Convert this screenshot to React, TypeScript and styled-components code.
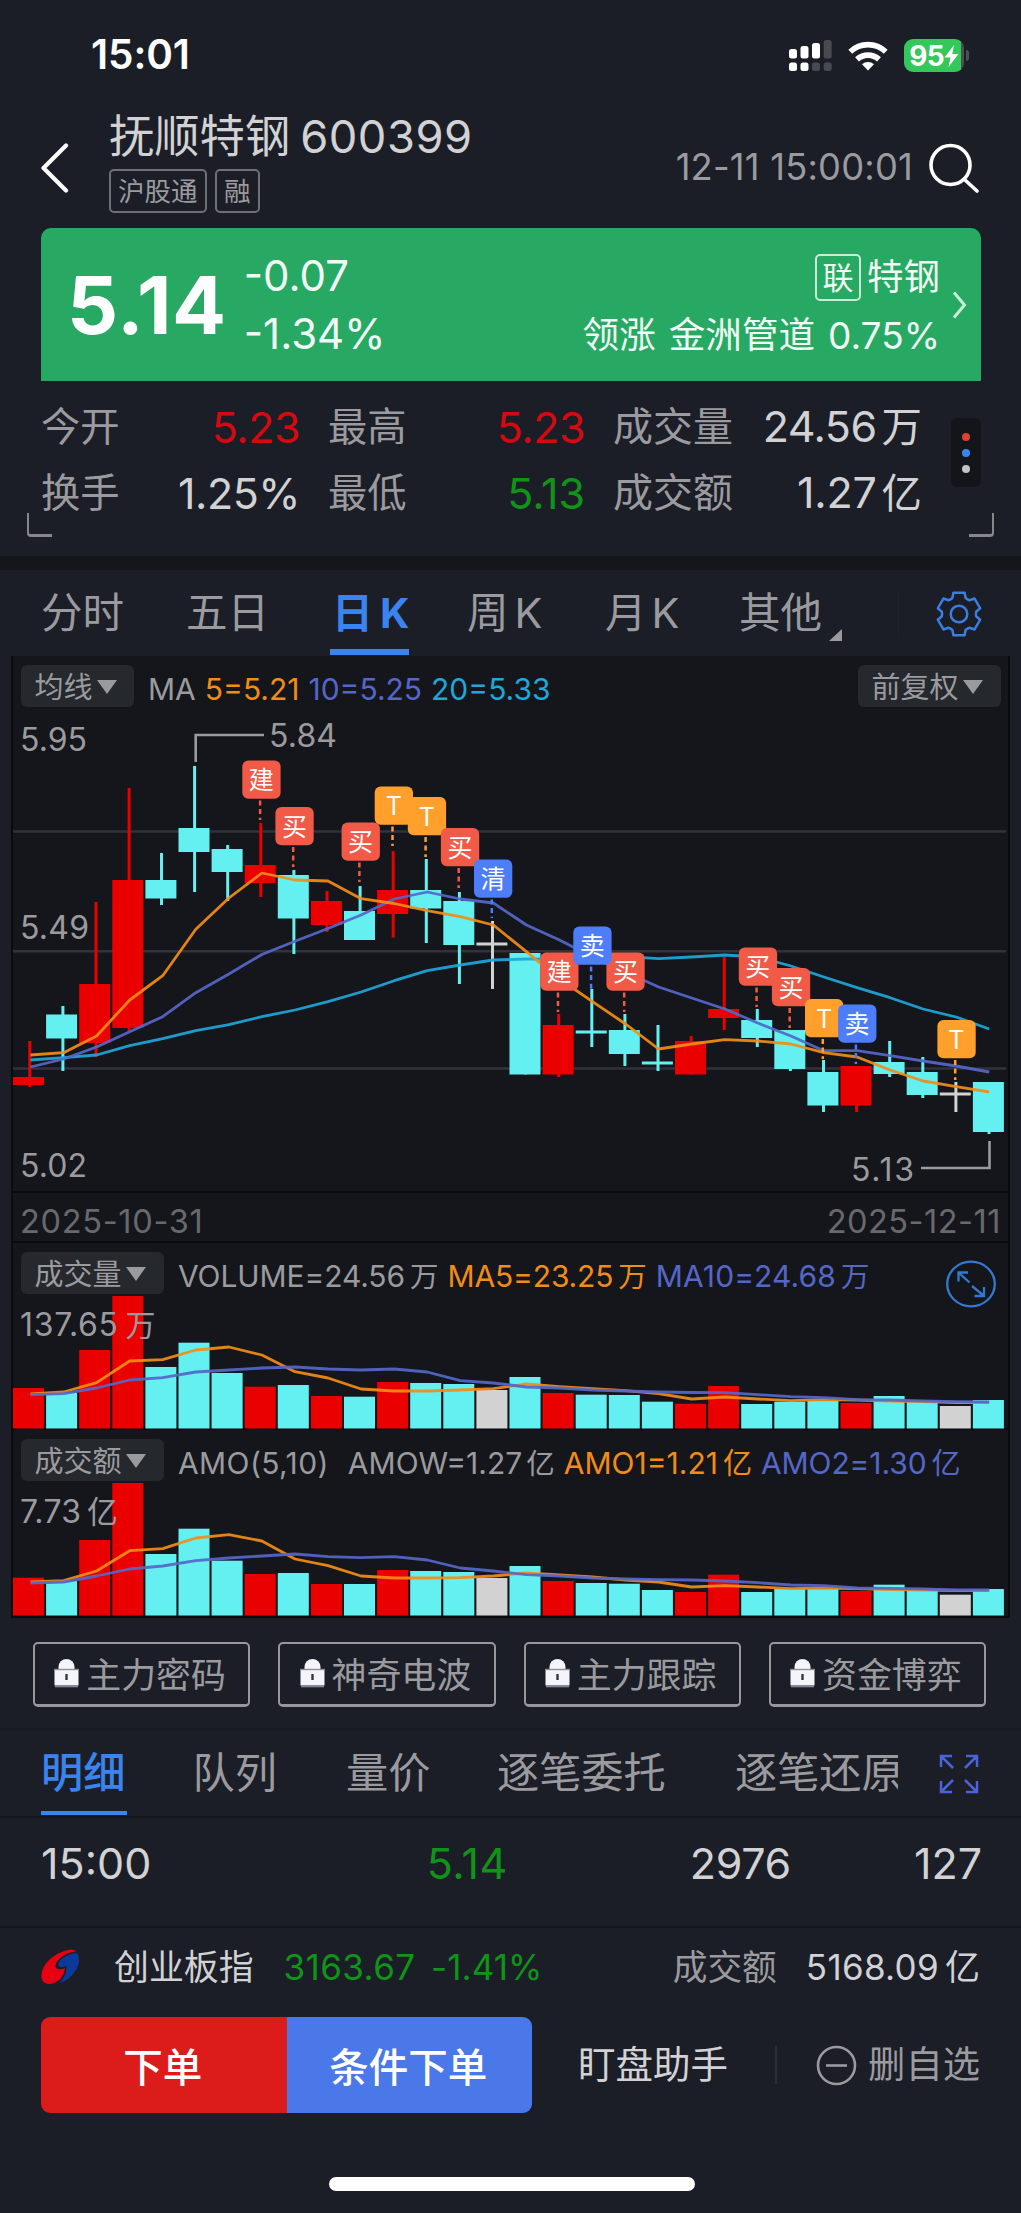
import React from 'react';
import styled, { createGlobalStyle, css } from 'styled-components';

const C = {
  bg: '#1b1e27',
  panel: '#15161b',
  line: '#0a0b0e',
  text: '#d2d2d4',
  dim: '#9b9b9f',
  faint: '#68696d',
  blue: '#3a84f0',
  red: '#eb0000',
  cyan: '#64f0f0',
  grey: '#d2d2d2',
  down: '#109418',
  up: '#d40a10',
  ma5: '#f28c18',
  ma10: '#5467c8',
  ma20: '#1ea7d8',
};

const FONT = `Inter, "Noto Sans CJK SC", sans-serif`;

const Global = createGlobalStyle`
  html, body { margin: 0; background: ${C.bg}; }
  * { box-sizing: border-box; }
  svg { display: block; flex: none; }
`;

const Screen = styled.div`
  width: 1021px;
  height: 2213px;
  display: flex;
  flex-direction: column;
  overflow: hidden;
  background: ${C.bg};
  color: ${C.text};
  font-family: ${FONT};
  line-height: 1;
  white-space: nowrap;
`;

interface TProps { $s: number; $c?: string; $w?: number; $ls?: number; $ml?: number; }
const T = styled.span<TProps>`
  font-size: ${p => p.$s}px;
  font-weight: ${p => p.$w ?? 400};
  letter-spacing: ${p => p.$ls ?? 0}px;
  margin-left: ${p => p.$ml ?? 0}px;
  ${p => p.$c && css`color: ${p.$c};`}
`;
const Unit = styled.span<{ $gap?: number; $em?: number }>`
  margin-left: ${p => p.$gap ?? 5}px;
  font-size: ${p => p.$em ?? 1}em;
  letter-spacing: 0;
`;

/* ---------- status bar ---------- */
const StatusBar = styled.header`
  height: 111px;
  display: flex;
  align-items: center;
  padding: 0 52px 0 91px;
`;
const StatusIcons = styled.div`
  margin-left: auto;
  display: flex;
  align-items: center;
  gap: 16px;
`;
const Battery = styled.div`
  display: flex;
  align-items: center;
  justify-content: center;
  width: 60px;
  height: 33px;
  border-radius: 9px;
  background: linear-gradient(90deg, #34c759 95%, #4d5055 95%);
  color: #fff;
`;
const BatteryNub = styled.i`
  width: 3px;
  height: 11px;
  margin-left: -14px;
  border-radius: 0 4px 4px 0;
  background: #4d5055;
`;

/* ---------- title ---------- */
const TitleBar = styled.div`
  height: 117px;
  display: flex;
  align-items: flex-start;
  padding: 0 41px;
`;
const BackIcon = styled.svg`margin-top: 32px;`;
const TitleBlock = styled.div`
  margin-left: 40px;
  display: flex;
  flex-direction: column;
`;
const TitleLine = styled.div`
  height: 52px;
  display: flex;
  align-items: center;
`;
const Tags = styled.div`
  display: flex;
  gap: 8.5px;
  margin-top: 6px;
`;
const Tag = styled.span`
  height: 44px;
  display: flex;
  align-items: center;
  padding: 0 7px;
  border: 2px solid #6e7075;
  border-radius: 5px;
  font-size: 26.5px;
  color: ${C.dim};
`;
const TitleRight = styled.div`
  margin-left: auto;
  margin-top: 31px;
  display: flex;
  align-items: center;
  gap: 16px;
`;

/* ---------- quote card ---------- */
const Quote = styled.section`
  height: 153px;
  margin: 0 40px 0 41px;
  padding: 0 13px 0 26px;
  display: flex;
  align-items: center;
  border-radius: 10px 10px 0 0;
  background: #27a963;
  color: #fff;
`;
const Stack = styled.div<{ $ml?: string; $end?: boolean }>`
  display: flex;
  flex-direction: column;
  align-items: ${p => (p.$end ? 'flex-end' : 'flex-start')};
  margin-left: ${p => p.$ml ?? '0'};
  margin-top: ${p => (p.$end ? '3px' : '0')};
  color: #f1fbf5;
`;
const StackRow = styled.div`
  height: 58px;
  display: flex;
  align-items: center;
`;
const LinkTag = styled.span`
  width: 46px;
  height: 47px;
  display: flex;
  align-items: center;
  justify-content: center;
  border: 2px solid #c9ecd8;
  border-radius: 5px;
  margin-right: 6px;
  font-size: 31px;
`;

/* ---------- stats ---------- */
const Stats = styled.section`
  position: relative;
  height: 175px;
  display: flex;
  align-items: flex-start;
  padding: 13px 40px 0 41px;
`;
const StatGrid = styled.div`
  display: grid;
  grid-template-columns: 259px 257px 309px;
  grid-auto-rows: 66px;
  column-gap: 28px;
`;
const Stat = styled.div`
  display: flex;
  align-items: center;
  justify-content: space-between;
`;
const MorePill = styled.div`
  width: 30px;
  height: 69px;
  margin: 24px 0 0 auto;
  display: flex;
  flex-direction: column;
  align-items: center;
  justify-content: center;
  gap: 8px;
  border-radius: 6px;
  background: #14151a;
`;
const Dot = styled.i<{ $c: string }>`
  width: 8px;
  height: 8px;
  border-radius: 50%;
  background: ${p => p.$c};
`;
const Corner = styled.i<{ $side: 'left' | 'right' }>`
  position: absolute;
  bottom: 19px;
  ${p => p.$side}: 27px;
  width: 25px;
  height: 24px;
  border: 0 solid #85878b;
  border-bottom-width: 3px;
  border-${p => p.$side}-width: 2px;
  border-bottom-${p => p.$side}-radius: 4px;
`;
const Band = styled.div`
  height: 14px;
  background: #15161b;
`;

/* ---------- period tabs ---------- */
const Tabs = styled.nav`
  height: 86px;
  display: grid;
  grid-template-columns: 145px 144px 137px 138px 134px 159px 1fr;
  padding-left: 41px;
  color: ${C.dim};
`;
const Tab = styled.div`
  display: flex;
  align-items: center;
  height: 86px;
  padding-top: 2px;
  font-size: 41.5px;
`;
const TabActive = styled(Tab)`
  height: 85px;
  width: 79px;
  padding-left: 2px;
  font-weight: 700;
  font-size: 41px;
  color: ${C.blue};
  border-bottom: 6px solid ${C.blue};
  border-top: 6px solid transparent;
`;
const CornerMark = styled.i`
  align-self: flex-end;
  margin: 0 0 15px 7px;
  border-left: 13px solid transparent;
  border-bottom: 12px solid ${C.dim};
`;
const GearCell = styled.div`
  display: flex;
  align-items: center;
  height: 46px;
  margin-top: 20.5px;
  border-left: 1px solid #20232c;
  padding-left: 37px;
`;

/* ---------- charts ---------- */
const Charts = styled.section`
  width: 999px;
  height: 962px;
  margin-left: 11px;
  border: 2px solid ${C.line};
  border-top: 0;
  background: ${C.panel};
  display: flex;
  flex-direction: column;
`;
const Panel = styled.div<{ $h: number; $last?: boolean }>`
  position: relative;
  flex: none;
  height: ${p => p.$h}px;
  border-bottom: ${p => (p.$last ? 0 : 2)}px solid ${C.line};
  display: flex;
  flex-direction: column;
  justify-content: space-between;
`;
const Legend = styled.div`
  display: flex;
  align-items: center;
  margin: 9px 7px 0 8px;
  height: 42px;
`;
const Values = styled.div`
  display: flex;
  align-items: center;
  height: 30px;
  padding-top: 6px;
`;
const Chip = styled.div<{ $w: number; $right?: boolean }>`
  width: ${p => p.$w}px;
  height: 42px;
  margin-left: ${p => (p.$right ? 'auto' : '0')};
  margin-right: ${p => (p.$right ? '0' : '14px')};
  display: flex;
  align-items: center;
  padding: 2px 0 0 13.5px;
  gap: 4px;
  border-radius: 6px;
  background: #25282d;
  color: ${C.dim};
  font-size: 29px;
`;
const Caret = styled.i`
  margin-top: -1px;
  border: 10.5px solid transparent;
  border-top: 14px solid ${C.dim};
  border-bottom: 0;
`;
const DateRow = styled.div`
  flex: none;
  height: 50px;
  display: flex;
  align-items: center;
  justify-content: space-between;
  padding: 10px 7px 0 7px;
  border-bottom: 2px solid ${C.line};
`;
const Expand = styled.svg`
  position: absolute;
  right: 12.5px;
  top: 17px;
`;

/* ---------- strategy buttons ---------- */
const LockRow = styled.div`
  height: 112px;
  display: flex;
  gap: 28px;
  padding: 24px 35px 0 33px;
  border-bottom: 2px solid #181a22;
`;
const LockButton = styled.button`
  flex: 1;
  height: 65px;
  display: flex;
  align-items: center;
  justify-content: center;
  gap: 7px;
  padding: 0 3px 2px 0;
  border: 2px solid #98989c;
  border-bottom-width: 3px;
  border-radius: 5px;
  background: none;
  color: ${C.dim};
  font: 400 34.9px ${FONT};
`;

/* ---------- detail ---------- */
const DetailTabs = styled.nav`
  height: 88px;
  display: grid;
  grid-template-columns: 150.5px 153.5px 151px 238px 164px 1fr;
  padding-left: 41px;
  border-bottom: 2px solid #15171e;
  color: ${C.dim};
`;
const DetailTab = styled.div<{ $on?: boolean }>`
  height: 85px;
  width: max-content;
  max-width: 100%;
  overflow: hidden;
  display: flex;
  align-items: center;
  font-size: 42.2px;
  padding-left: 1px;
  padding-top: 2px;
  ${p => p.$on && css`
    width: 86px;
    color: ${C.blue};
    font-weight: 500;
    padding-left: 0;
    padding-top: 6px;
    border-bottom: 4px solid ${C.blue};
  `}
`;
const FullIcon = styled.svg`
  margin: 24px 0 0 41px;
`;
const Trade = styled.div`
  height: 110px;
  display: grid;
  grid-template-columns: 308px 159px 283px 191px;
  align-items: center;
  padding: 0 0 18px 41px;
  border-bottom: 2px solid #15171e;
  text-align: right;
`;
const TradeTime = styled(T)`text-align: left;`;

/* ---------- bottom ---------- */
const IndexRow = styled.div`
  height: 89px;
  display: flex;
  align-items: center;
  padding: 0 41px 11px 40px;
`;
const Spacer = styled.div`flex: 1;`;
const Actions = styled.div`
  height: 96px;
  display: flex;
  align-items: center;
  padding: 0 41px;
`;
const Action = styled.button<{ $bg: string; $left?: boolean }>`
  width: 245.5px;
  height: 96px;
  padding: 0 2px 2px 0;
  border: 0;
  border-radius: ${p => (p.$left ? '9px 0 0 9px' : '0 9px 9px 0')};
  background: ${p => p.$bg};
  color: #fff;
  font: 500 39.5px ${FONT};
`;
const VLine = styled.i`
  width: 2px;
  height: 38px;
  margin-left: 47px;
  background: #2b2e38;
`;
const HomeBar = styled.div`
  width: 366px;
  height: 14px;
  margin: 64px auto 0 329px;
  border-radius: 7px;
  background: #fff;
`;

/* ---------- data ---------- */
type Tone = 'r' | 'c' | 'g';
const FILL: Record<Tone, string> = { r: C.red, c: C.cyan, g: C.grey };

// [tone, body top, body bottom, wick top, wick bottom]
const CANDLES: [Tone, number, number, number, number][] = [
  ['r', 1077, 1085, 1041, 1087], ['c', 1014.5, 1038.5, 1006, 1071], ['r', 984, 1043, 902, 1057],
  ['r', 880, 1028, 788, 1031], ['c', 880, 898.5, 853, 905], ['c', 828, 852, 766, 892],
  ['c', 849, 872, 845, 901], ['r', 865, 883, 823, 897], ['c', 875, 918.5, 870, 954],
  ['r', 901, 925, 891, 932], ['c', 911, 940, 886, 940], ['r', 890, 914, 851, 937.5],
  ['c', 890, 908.5, 859, 943], ['c', 901, 945, 892, 984], ['g', 942.5, 945.5, 921, 989],
  ['c', 953, 1074.5, 953, 1074.5], ['r', 1025, 1074.5, 1014, 1077], ['c', 1030.5, 1033.5, 989, 1047],
  ['c', 1030, 1054, 1014, 1066], ['c', 1061.5, 1064.5, 1025, 1071], ['r', 1041, 1074.5, 1036, 1074.5],
  ['r', 1009, 1018, 957, 1030], ['c', 1020, 1038, 1009, 1047], ['c', 1030, 1069, 1030, 1071],
  ['c', 1072, 1105.5, 1060, 1112], ['r', 1066, 1105.5, 1066, 1112], ['c', 1062, 1074, 1041, 1077],
  ['c', 1072, 1095, 1057, 1098], ['g', 1092.5, 1095.5, 1082, 1112], ['c', 1082, 1132, 1082, 1134],
];
const MA5 = [1055, 1052.7, 1036, 1000, 975.7, 929.3, 898, 873, 880, 881, 898.7, 903.5, 910.7, 916.7, 925, 951.7, 979, 1001.7, 1024, 1049, 1044, 1039.7, 1041, 1044, 1052.7, 1057, 1070, 1081, 1086.7, 1092];
const MA10 = [1067, 1059, 1047, 1031.7, 1016.7, 992.7, 974, 954.5, 941.3, 928.5, 915, 899, 892, 899, 903, 925, 940, 957, 972, 987, 998, 1009, 1023, 1036, 1050.7, 1050.7, 1055.7, 1061, 1066, 1072];
const MA20 = [1060, 1057.7, 1055, 1045.7, 1038.7, 1030.7, 1024.7, 1016.7, 1010, 1001.7, 992, 980.7, 970.7, 965, 960, 959, 959, 957.5, 956.7, 958.7, 957, 955, 957, 966, 977, 987.7, 997.7, 1009, 1017, 1029];

const MARK: Record<string, string> = { r: '#f05a46', t: '#ffa02d', b: '#4d7df8' };
// [index, kind, label, top, stem bottom] in paint order
const MARKS: [number, string, string, number, number][] = [
  [7, 'r', '建', 760.5, 820], [8, 'r', '买', 807, 867], [10, 'r', '买', 822.5, 882],
  [11, 't', 'T', 786.5, 846], [12, 't', 'T', 797, 857], [13, 'r', '买', 828, 888],
  [14, 'b', '清', 859.5, 918], [16, 'r', '建', 952.5, 1012], [18, 'r', '买', 952.5, 1012],
  [17, 'b', '卖', 926.5, 990], [22, 'r', '买', 947.5, 1007], [23, 'r', '买', 968, 1028],
  [24, 't', 'T', 999, 1059], [25, 'b', '卖', 1004.5, 1064], [28, 't', 'T', 1020, 1080],
];

const VOL = [1387, 1391.7, 1349, 1295, 1366, 1341.7, 1372, 1385.7, 1384, 1395, 1395.7, 1381, 1382, 1383, 1389, 1376, 1392, 1393.7, 1394, 1400.7, 1402.7, 1385, 1403, 1400.7, 1400, 1402, 1395, 1401, 1405, 1399];
const VOL5 = [1393, 1391, 1381.7, 1360, 1358.7, 1349, 1346, 1354, 1370.7, 1377, 1388, 1390, 1390, 1389, 1387.7, 1383, 1385.7, 1387.7, 1389.7, 1392.7, 1398, 1396, 1398, 1399.7, 1398.7, 1399, 1400, 1400.7, 1401.7, 1401.7];
const VOL10 = [1393.7, 1392.7, 1387, 1379, 1376.7, 1371, 1369, 1367, 1366, 1368, 1369, 1368, 1371, 1379.7, 1382, 1386, 1387, 1389, 1390, 1391, 1391.5, 1391.7, 1393.7, 1395.7, 1396.7, 1398.7, 1399, 1400, 1400.7, 1401];
const AMO = [1577.7, 1581, 1540, 1483, 1554, 1528.7, 1560.7, 1574, 1573, 1584, 1584, 1570, 1571, 1572, 1578, 1566, 1581, 1583, 1583.7, 1590, 1592, 1574.7, 1592, 1589, 1589, 1591, 1584.7, 1590, 1594.7, 1589];
const AMO5 = [1582, 1580.7, 1571, 1550.7, 1548.7, 1538, 1534.7, 1541, 1559, 1565.7, 1576, 1578, 1578, 1577.7, 1576, 1573, 1575, 1577, 1580, 1582, 1587, 1585.7, 1587, 1588.7, 1588, 1588.7, 1589.7, 1590, 1590.7, 1590.7];
const AMO10 = [1583, 1582, 1576, 1569, 1566, 1560.7, 1558, 1556, 1554, 1556.7, 1557.7, 1556.7, 1560, 1568, 1571, 1574.7, 1576, 1578, 1579, 1579.7, 1580, 1581, 1582.7, 1585, 1585.7, 1588, 1588.3, 1589, 1590, 1590];

const left = (i: number) => 13 + i * 33.1;
const mid = (i: number) => 30.5 + i * 33.06;
const points = (ys: number[]) => ys.map((y, i) => `${mid(i).toFixed(1)},${y}`).join(' ');

const Line = ({ ys, color }: { ys: number[]; color: string }) => (
  <polyline points={points(ys)} fill="none" stroke={color} strokeWidth={2.8} strokeLinejoin="round" strokeOpacity={0.93} />
);

const ChartText = styled.text<{ $s?: number }>`
  font-family: ${FONT};
  font-size: ${p => p.$s ?? 32}px;
  fill: ${C.dim};
`;
const MarkText = styled.text`
  font-family: ${FONT};
  font-size: 25px;
  fill: #fff;
  text-anchor: middle;
`;

const PriceChart = () => (
  <svg width="995" height="476" viewBox="13 715 995 476">
    {[831.5, 951.3, 1068.5].map(y => (
      <line key={y} x1="13" x2="1006" y1={y} y2={y} stroke="#31323c" strokeWidth="2.6" />
    ))}
    {CANDLES.map(([k, t, b, wt, wb], i) => (
      <g key={i} fill={FILL[k]}>
        <rect x={left(i)} y={t} width="31" height={b - t} />
        <rect x={left(i) + 14.6 + (i < 4 ? 0.7 : 0)} y={wt} width="3" height={wb - wt} />
      </g>
    ))}
    <Line ys={MA20} color={C.ma20} />
    <Line ys={MA10} color={C.ma10} />
    <Line ys={MA5} color={C.ma5} />
    {MARKS.map(([i, k, label, top, end]) => {
      const cx = left(i) + 16.6;
      return (
        <g key={i}>
          <line x1={cx - 1.2} x2={cx - 1.2} y1={top + 40} y2={end} stroke={MARK[k]} strokeWidth="2.5" strokeDasharray="5 3.6" />
          <rect x={cx - 19} y={top} width="38.3" height="38.3" rx="6" fill={MARK[k]} />
          <MarkText x={cx} y={top + (label === 'T' ? 28.5 : 28.6)}>{label}</MarkText>
        </g>
      );
    })}
    <g fill="none" stroke={C.dim} strokeWidth="2.6">
      <path d="M195.7 762V735H264" />
      <path d="M989.5 1141V1168H921" />
    </g>
    <ChartText x="20" y="751" textLength="67">5.95</ChartText>
    <ChartText x="269" y="747" textLength="68">5.84</ChartText>
    <ChartText x="20" y="939" textLength="69">5.49</ChartText>
    <ChartText x="20" y="1177" textLength="67">5.02</ChartText>
    <ChartText x="851" y="1180.5" textLength="63">5.13</ChartText>
  </svg>
);

const BarChart = ({ top, bottom, bars, five, ten, children }: {
  top: number; bottom: number; bars: number[]; five: number[]; ten: number[]; children: React.ReactNode;
}) => (
  <svg width="995" height={bottom - top + 1} viewBox={`13 ${top} 995 ${bottom - top + 1}`}>
    {bars.map((y, i) => (
      <rect key={i} x={left(i)} y={y} width="31" height={bottom + 0.5 - y} fill={FILL[CANDLES[i][0]]} />
    ))}
    <Line ys={five} color={C.ma5} />
    <Line ys={ten} color={C.ma10} />
    {children}
  </svg>
);

const gearPath = (() => {
  const pt = (x: number, y: number, k: number) => {
    const a = (k * Math.PI) / 3;
    return `${(23 + x * Math.cos(a) - y * Math.sin(a)).toFixed(2)} ${(23 + x * Math.sin(a) + y * Math.cos(a)).toFixed(2)}`;
  };
  let d = '';
  for (let k = 0; k < 6; k++) {
    d += `${k ? 'L' : 'M'}${pt(-5.6, -21.2, k)}L${pt(5.6, -21.2, k)}L${pt(6.6, -16, k)}Q${pt(8.4, -14.4, k)} ${pt(-6.6, -16, k + 1)}`;
  }
  return d + 'Z';
})();

const Lock = () => (
  <svg width="25" height="30" viewBox="0 0 25 30">
    <path d="M4.5 12V9a8 8 0 0 1 16 0v3Z" fill="#f4f4fa" />
    <path d="M0.5 11h24v16.5h-24Z" fill="#f4f4fa" />
    <path d="M0.5 11.5h24" stroke="#8d8f9b" strokeWidth="1.4" />
    <path d="M1 28.3h23" stroke="#85889c" strokeWidth="2" />
    <path d="M12.5 16v6" stroke="#34363f" strokeWidth="2.4" />
  </svg>
);

export default function App() {
  return (
    <Screen>
      <Global />
      <StatusBar>
        <T $s={40.5} $w={600} $c="#fff" $ls={-0.1}>15:01</T>
        <StatusIcons>
          <svg width="43" height="32" viewBox="0 0 43 32">
            <g fill="#fff">
              <rect x="0" y="9" width="8" height="9.5" rx="2.5" />
              <rect x="11.5" y="6" width="8" height="12.5" rx="2.5" />
              <rect x="23" y="3" width="8" height="15.5" rx="2.5" />
              <rect x="0" y="22.5" width="8" height="8.5" rx="2.5" />
              <rect x="11.5" y="22.5" width="8" height="8.5" rx="2.5" />
            </g>
            <g fill="#484a51">
              <rect x="34.7" y="0" width="8" height="18.5" rx="2.5" />
              <rect x="23" y="22.5" width="8" height="8.5" rx="2.5" />
              <rect x="34.7" y="22.5" width="8" height="8.5" rx="2.5" />
            </g>
          </svg>
          <svg width="40" height="31" viewBox="0 0 40 31">
            <g fill="none" stroke="#fff" strokeWidth="5.6">
              <path d="M2.3 11.8a25.5 25.5 0 0 1 35.4 0" />
              <path d="M9 19.4a16.2 16.2 0 0 1 22 0" />
            </g>
            <path d="M20 30.5l-6-6.2a9 9 0 0 1 12 0Z" fill="#fff" />
          </svg>
          <Battery>
            <T $s={28} $w={700} $ls={-0.8}>95</T>
            <svg width="15" height="22" viewBox="0 0 15 22"><path d="M10 0L0.5 12.5h6L4.5 22L14.5 9H8.3Z" fill="#fff" /></svg>
          </Battery>
          <BatteryNub />
        </StatusIcons>
      </StatusBar>

      <TitleBar>
        <BackIcon width="28" height="50" viewBox="0 0 28 50">
          <path d="M25 2.5L2.500 25L25 47.5" fill="none" stroke="#fff" strokeWidth="4.2" strokeLinecap="round" strokeLinejoin="round" />
        </BackIcon>
        <TitleBlock>
          <TitleLine>
            <T $s={45.3}>抚顺特钢</T>
            <T $s={45.3} $ml={10} $ls={0.5}>600399</T>
          </TitleLine>
          <Tags><Tag>沪股通</Tag><Tag>融</Tag></Tags>
        </TitleBlock>
        <TitleRight>
          <T $s={36.3} $c={C.dim} $ls={0.2}>12-11 15:00:01</T>
          <svg width="51" height="51" viewBox="0 0 51 51">
            <g fill="none" stroke="#fff" strokeWidth="3.6" strokeLinecap="round">
              <circle cx="21.500" cy="23" r="19.5" />
              <path d="M35.5 37.5L48 49" />
            </g>
          </svg>
        </TitleRight>
      </TitleBar>

      <Quote>
        <T $s={80} $w={700} $ls={0.6}>5.14</T>
        <Stack $ml="17px">
          <StackRow><T $s={42}>-0.07</T></StackRow>
          <StackRow><T $s={42}>-1.34%</T></StackRow>
        </Stack>
        <Stack $ml="auto" $end>
          <StackRow><LinkTag>联</LinkTag><T $s={36.5}>特钢</T></StackRow>
          <StackRow><T $s={36.6}>领涨</T><T $s={36.6} $ml={13}>金洲管道</T><T $s={37} $ml={13}>0.75%</T></StackRow>
        </Stack>
        <svg width="28" height="30" viewBox="-11 0 28 30">
          <path d="M3 2.5L13.5 15L3 27.5" fill="none" stroke="#c9ecd8" strokeWidth="3" />
        </svg>
      </Quote>

      <Stats>
        <StatGrid>
          <Stat><T $s={39.3} $c={C.dim}>今开</T><T $s={43} $ls={-0.5} $c={C.up}>5.23</T></Stat>
          <Stat><T $s={39.3} $c={C.dim}>最高</T><T $s={43} $ls={-0.5} $c={C.up}>5.23</T></Stat>
          <Stat><T $s={40} $c={C.dim}>成交量</T><T $s={43} $ls={-0.5}>24.56<Unit $gap={5} $em={0.94}>万</Unit></T></Stat>
          <Stat><T $s={39.3} $c={C.dim}>换手</T><T $s={43} $ls={-0.5}>1.25%</T></Stat>
          <Stat><T $s={39.3} $c={C.dim}>最低</T><T $s={43} $c={C.down}>5.13</T></Stat>
          <Stat><T $s={40} $c={C.dim}>成交额</T><T $s={43} $ls={-0.2}>1.27<Unit $gap={5} $em={0.94}>亿</Unit></T></Stat>
        </StatGrid>
        <MorePill><Dot $c="#d9432f" /><Dot $c="#3a84f0" /><Dot $c="#c3c3c6" /></MorePill>
        <Corner $side="left" />
        <Corner $side="right" />
      </Stats>
      <Band />

      <Tabs>
        <Tab>分时</Tab>
        <Tab>五日</Tab>
        <div><TabActive>日<Unit $gap={7}>K</Unit></TabActive></div>
        <Tab>周<Unit $gap={6}>K</Unit></Tab>
        <Tab>月<Unit>K</Unit></Tab>
        <Tab>其他<CornerMark /></Tab>
        <GearCell>
          <svg width="46" height="46" viewBox="0 0 46 46">
            <g fill="none" stroke="#3a7fdf" strokeWidth="2.5" strokeLinejoin="round">
              <path d={gearPath} />
              <circle cx="23" cy="23" r="8.3" />
            </g>
          </svg>
        </GearCell>
      </Tabs>

      <Charts>
        <Panel $h={537}>
          <Legend>
            <Chip $w={113}>均线<Caret /></Chip>
            <Values>
              <T $s={30} $c={C.dim}>MA</T>
              <T $s={30} $c={C.ma5} $ml={9}>5=5.21</T>
              <T $s={30} $c={C.ma10} $ml={9}>10=5.25</T>
              <T $s={30} $c={C.ma20} $ml={9}>20=5.33</T>
            </Values>
            <Chip $w={143} $right>前复权<Caret /></Chip>
          </Legend>
          <PriceChart />
        </Panel>
        <DateRow>
          <T $s={32.5} $c={C.faint} $ls={0.7}>2025-10-31</T>
          <T $s={32.5} $c={C.faint} $ls={0.5}>2025-12-11</T>
        </DateRow>
        <Panel $h={187}>
          <Legend>
            <Chip $w={143}>成交量<Caret /></Chip>
            <Values>
              <T $s={30} $c={C.dim} $ls={-0.1}>VOLUME=24.56<Unit $em={0.95}>万</Unit></T>
              <T $s={30} $c={C.ma5} $ml={9} $ls={-0.15}>MA5=23.25<Unit $em={0.95}>万</Unit></T>
              <T $s={30} $c={C.ma10} $ml={9} $ls={0.1}>MA10=24.68<Unit $em={0.95}>万</Unit></T>
            </Values>
          </Legend>
          <BarChart top={1293} bottom={1427} bars={VOL} five={VOL5} ten={VOL10}>
            <ChartText x="20" y="1334.5" textLength="98">137.65</ChartText>
            <ChartText x="125.5" y="1334.5" $s={30}>万</ChartText>
          </BarChart>
          <Expand width="50" height="48" viewBox="0 0 50 48">
            <g fill="none" stroke="#3279cf" strokeWidth="2.3">
              <ellipse cx="25" cy="24" rx="23.8" ry="22.3" />
              <path d="M12.5 21.5V12.5H22M13 13L23.5 22.5M26 26L37.5 35.5M38 27V36H28.5" />
            </g>
          </Expand>
        </Panel>
        <Panel $h={186} $last>
          <Legend>
            <Chip $w={143}>成交额<Caret /></Chip>
            <Values>
              <T $s={30} $c={C.dim} $ls={0.4}>AMO(5,10)</T>
              <T $s={30} $c={C.dim} $ml={19}>AMOW=1.27<Unit $gap={4} $em={0.95}>亿</Unit></T>
              <T $s={30} $c={C.ma5} $ml={9}>AMO1=1.21<Unit $em={0.97}>亿</Unit></T>
              <T $s={30} $c={C.ma10} $ml={9} $ls={-0.1}>AMO2=1.30<Unit $em={0.97}>亿</Unit></T>
            </Values>
          </Legend>
          <BarChart top={1481} bottom={1615} bars={AMO} five={AMO5} ten={AMO10}>
            <ChartText x="20" y="1522.5" textLength="61">7.73</ChartText>
            <ChartText x="87" y="1522.5" $s={31}>亿</ChartText>
          </BarChart>
        </Panel>
      </Charts>

      <LockRow>
        {['主力密码', '神奇电波', '主力跟踪', '资金博弈'].map(name => (
          <LockButton key={name}><Lock />{name}</LockButton>
        ))}
      </LockRow>

      <DetailTabs>
        <DetailTab $on>明细</DetailTab>
        <DetailTab>队列</DetailTab>
        <DetailTab>量价</DetailTab>
        <DetailTab>逐笔委托</DetailTab>
        <DetailTab>逐笔还原</DetailTab>
        <FullIcon width="40" height="40" viewBox="0 0 40 40">
          <g fill="none" stroke="#4a63d8" strokeWidth="2.5">
            <path d="M2 13V2H13M2 2L14 14M27 2H38V13M38 2L26 14M2 27V38H13M2 38L14 26M38 27V38H27M38 38L26 26" />
          </g>
        </FullIcon>
      </DetailTabs>

      <Trade>
        <TradeTime $s={43}>15:00</TradeTime>
        <T $s={43} $c={C.down} $ls={0.6}>5.14</T>
        <T $s={43} $ls={-0.3}>2976</T>
        <T $s={43}>127</T>
      </Trade>

      <IndexRow>
        <svg width="40" height="36" viewBox="0 0 40 36">
          <path d="M36 2.500C35 0.500 29 0 23 2.500C11 7 3 15 1.500 25C0.500 31 4 35.500 10 35C18 34 24 28 25 19C20 21.500 13.500 20.500 16 14.500C19 8 28 3 36 2.500Z" fill="#e60012" />
          <path d="M36.500 4C28 5 20 9.500 18.500 14C17 18.500 22 19 26.500 17C27 24 23 31 18.500 34.500C29 31.500 38 22 39 12C39.300 8 38.500 5.500 36.500 4Z" fill="#0b3a9c" />
        </svg>
        <T $s={34.9} $ml={34}>创业板指</T>
        <T $s={35} $ml={30} $c={C.down} $ls={0.4}>3163.67</T>
        <T $s={35} $ml={15.5} $c={C.down} $ls={0.1}>-1.41%</T>
        <Spacer />
        <T $s={34.7} $c={C.dim}>成交额</T>
        <T $s={35} $ml={29} $ls={0.3}>5168.09<Unit $gap={6}>亿</Unit></T>
      </IndexRow>

      <Actions>
        <Action $bg="#dc1c1b" $left>下单</Action>
        <Action $bg="#4a78e9">条件下单</Action>
        <T $s={37.5} $ml={46}>盯盘助手</T>
        <VLine />
        <Spacer />
        <svg width="41" height="41" viewBox="0 0 41 41">
          <g fill="none" stroke={C.dim} strokeWidth="2.6">
            <circle cx="20.500" cy="20.500" r="18.500" />
            <path d="M10 20.500H31" />
          </g>
        </svg>
        <T $s={37.3} $ml={11} $c={C.dim}>删自选</T>
      </Actions>
      <HomeBar />
    </Screen>
  );
}
